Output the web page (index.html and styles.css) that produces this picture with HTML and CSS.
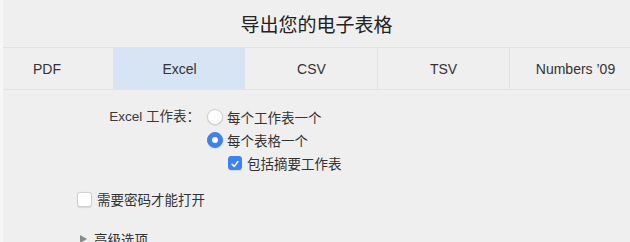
FILE: index.html
```html
<!DOCTYPE html>
<html lang="zh-CN">
<head>
<meta charset="utf-8">
<title>导出您的电子表格</title>
<link rel="stylesheet" href="styles.css">
</head>
<body>
<div class="window">
  <div class="title">导出您的电子表格</div>
  <div class="tabbar">
    <div class="tab">PDF</div>
    <div class="tab active">Excel</div>
    <div class="tab">CSV</div>
    <div class="tab">TSV</div>
    <div class="tab">Numbers ’09</div>
  </div>
  <div class="form">
    <div class="field">
      <div class="label">Excel 工作表：</div>
      <div class="options">
        <div class="option"><span class="radio"></span><span>每个工作表一个</span></div>
        <div class="option"><span class="radio on"></span><span>每个表格一个</span></div>
        <div class="option sub"><span class="check on"><svg viewBox="0 0 14 14" width="14" height="14"><path d="M3.6 7.3 L6 9.8 L10.4 4.2" fill="none" stroke="#fff" stroke-width="1.8" stroke-linecap="round" stroke-linejoin="round"/></svg></span><span>包括摘要工作表</span></div>
      </div>
    </div>
    <div class="password"><span class="check"></span><span>需要密码才能打开</span></div>
    <div class="advanced"><span class="tri"></span><span>高级选项</span></div>
  </div>
</div>
</body>
</html>
```
FILE: styles.css
```css
html, body {
  margin: 0;
  padding: 0;
  background: #efefef;
  overflow: hidden;
}
body {
  font-family: "Liberation Sans", "Noto Sans CJK SC", sans-serif;
  color: #2b2b2b;
}
.window {
  width: 627px;
  height: 242px;
  border-left: 3px solid #f6f6f6;
  overflow: hidden;
}
.title {
  height: 47px;
  box-sizing: border-box;
  padding-top: 14px;
  font-size: 19px;
  line-height: 24px;
  text-align: center;
  color: #222;
}
.tabbar {
  display: flex;
  height: 41px;
  border-top: 1px solid #e3e3e3;
  border-bottom: 1px solid #e3e3e3;
  margin-left: -22px;
  width: 700px;
}
.tab {
  flex: 0 0 132px;
  box-sizing: border-box;
  border-left: 1px solid #e3e3e3;
  display: flex;
  align-items: center;
  justify-content: center;
  font-size: 14px;
  color: #333;
}
.tab:first-child { border-left: none; }
.tab.active {
  background: #d7e4f4;
  border-left-color: #d7e4f4;
}
.tab.active + .tab { border-left-color: transparent; }
.form {
  padding-top: 15px;
  font-size: 13.5px;
  color: #333;
}
.field {
  display: flex;
  align-items: flex-start;
}
.label {
  width: 197px;
  box-sizing: border-box;
  text-align: right;
  line-height: 23px;
  color: #3a3a3a;
}
.options {
  margin-left: 7px;
  display: flex;
  flex-direction: column;
}
.option {
  display: flex;
  align-items: center;
  height: 23px;
  gap: 4px;
}
.option.sub {
  height: 24px;
  margin-left: 21px;
  gap: 5px;
}
.radio {
  width: 16px;
  height: 16px;
  box-sizing: border-box;
  border-radius: 50%;
  background: #fff;
  border: 0.5px solid #d0d0d0;
  box-shadow: 0 0.5px 1px rgba(0,0,0,0.12);
  display: inline-block;
  position: relative;
}
.radio.on {
  background: #3a82f7;
  border-color: #3a82f7;
}
.radio.on::after {
  content: "";
  position: absolute;
  left: 50%;
  top: 50%;
  width: 6px;
  height: 6px;
  margin: -3px 0 0 -3px;
  border-radius: 50%;
  background: #fff;
}
.check {
  width: 14px;
  height: 14px;
  box-sizing: border-box;
  border-radius: 3px;
  background: #fff;
  border: 0.5px solid #d0d0d0;
  box-shadow: 0 0.5px 1px rgba(0,0,0,0.1);
  display: inline-flex;
}
.check.on {
  background: #3a82f7;
  border-color: #3a82f7;
}
.check svg { display: block; }
.password {
  display: flex;
  align-items: center;
  gap: 5px;
  margin-top: 12px;
  margin-left: 74px;
  height: 24px;
}
.password .check {
  width: 15px;
  height: 15px;
}
.advanced {
  display: flex;
  align-items: center;
  gap: 7px;
  margin-top: 16px;
  margin-left: 77px;
  height: 24px;
}
.tri {
  width: 0;
  height: 0;
  border-top: 4px solid transparent;
  border-bottom: 4px solid transparent;
  border-left: 7px solid #8a8a8a;
}
```
